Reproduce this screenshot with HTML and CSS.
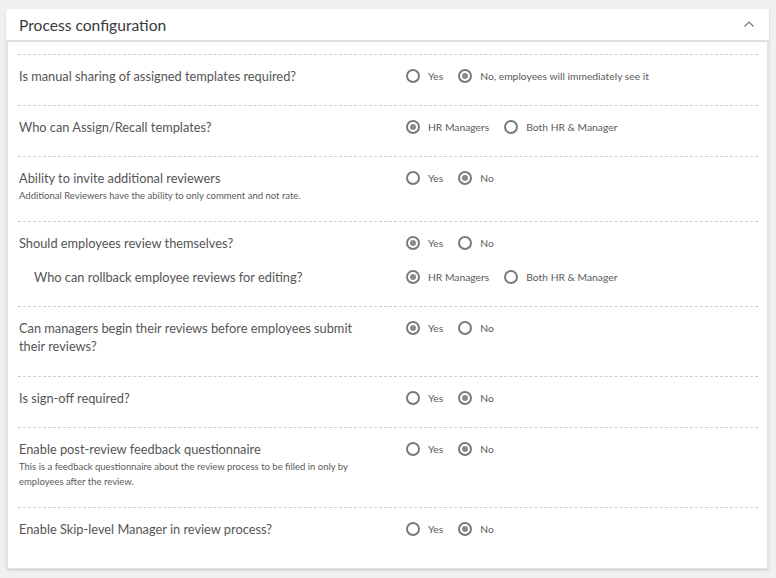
FILE: index.html
```html
<!DOCTYPE html>
<html>
<head>
<meta charset="utf-8">
<link rel="stylesheet" href="styles.css">
</head>
<body>
<div class="card">
  <div class="card-header">
    <span class="title">Process configuration</span>
    <svg class="chevron" width="12" height="8" viewBox="0 0 12 8"><polyline points="1.5,6.5 6,2 10.5,6.5" fill="none" stroke="#777" stroke-width="1.2"/></svg>
  </div>
  <div class="card-body">
    <div class="row">
      <div class="line">
        <div class="label"><div class="q">Is manual sharing of assigned templates required?</div></div>
        <div class="controls">
          <span class="opt"><span class="radio"></span>Yes</span>
          <span class="opt"><span class="radio on"></span>No, employees will immediately see it</span>
        </div>
      </div>
    </div>
    <div class="row">
      <div class="line">
        <div class="label"><div class="q">Who can Assign/Recall templates?</div></div>
        <div class="controls">
          <span class="opt"><span class="radio on"></span>HR Managers</span>
          <span class="opt"><span class="radio"></span>Both HR &amp; Manager</span>
        </div>
      </div>
    </div>
    <div class="row">
      <div class="line">
        <div class="label"><div class="q">Ability to invite additional reviewers</div><div class="sub">Additional Reviewers have the ability to only comment and not rate.</div></div>
        <div class="controls">
          <span class="opt"><span class="radio"></span>Yes</span>
          <span class="opt"><span class="radio on"></span>No</span>
        </div>
      </div>
    </div>
    <div class="row">
      <div class="line">
        <div class="label"><div class="q">Should employees review themselves?</div></div>
        <div class="controls">
          <span class="opt"><span class="radio on"></span>Yes</span>
          <span class="opt"><span class="radio"></span>No</span>
        </div>
      </div>
      <div class="line nested">
        <div class="label"><div class="q">Who can rollback employee reviews for editing?</div></div>
        <div class="controls">
          <span class="opt"><span class="radio on"></span>HR Managers</span>
          <span class="opt"><span class="radio"></span>Both HR &amp; Manager</span>
        </div>
      </div>
    </div>
    <div class="row tall">
      <div class="line">
        <div class="label"><div class="q">Can managers begin their reviews before employees submit their reviews?</div></div>
        <div class="controls">
          <span class="opt"><span class="radio on"></span>Yes</span>
          <span class="opt"><span class="radio"></span>No</span>
        </div>
      </div>
    </div>
    <div class="row">
      <div class="line">
        <div class="label"><div class="q">Is sign-off required?</div></div>
        <div class="controls">
          <span class="opt"><span class="radio"></span>Yes</span>
          <span class="opt"><span class="radio on"></span>No</span>
        </div>
      </div>
    </div>
    <div class="row">
      <div class="line">
        <div class="label"><div class="q">Enable post-review feedback questionnaire</div><div class="sub">This is a feedback questionnaire about the review process to be filled in only by employees after the review.</div></div>
        <div class="controls">
          <span class="opt"><span class="radio"></span>Yes</span>
          <span class="opt"><span class="radio on"></span>No</span>
        </div>
      </div>
    </div>
    <div class="row">
      <div class="line">
        <div class="label"><div class="q">Enable Skip-level Manager in review process?</div></div>
        <div class="controls">
          <span class="opt"><span class="radio"></span>Yes</span>
          <span class="opt"><span class="radio on"></span>No</span>
        </div>
      </div>
    </div>
  </div>
</div>
</body>
</html>
```

FILE: styles.css
```css
html, body {
  margin: 0;
  padding: 0;
  background: #f0f0f0;
  font-family: Lato, "Open Sans", sans-serif;
}
body {
  padding: 9px 7px 8px 6px;
}
.card {
  background: #fff;
  border-radius: 3px;
  box-shadow: 0 1px 2px rgba(0,0,0,0.18);
}
.card-header {
  height: 31px;
  display: flex;
  align-items: center;
  justify-content: space-between;
  padding: 0 14px 0 13px;
  border-bottom: 2px solid #e0e0e0;
}
.title {
  font-size: 15.6px;
  color: #3a3a3a;
}
.chevron {
  margin-top: -1px;
}
.card-body {
  border-left: 2px solid #e4e4e4;
  border-right: 2px solid #e4e4e4;
  border-bottom: 1px solid #e4e4e4;
  border-radius: 0 0 3px 3px;
  padding: 12px 9px 10px 10px;
}
.row {
  border-top: 1px dashed #cfcfcf;
  padding: 12px 0 20px;
}
.row.tall {
  padding-bottom: 21px;
}
.line {
  display: grid;
  grid-template-columns: 388px 1fr;
  align-items: start;
}
.line.nested {
  margin-top: 16px;
}
.line.nested .label {
  padding-left: 16px;
}
.label {
  padding-left: 1px;
}
.q {
  font-size: 12.8px;
  line-height: 18px;
  color: #555;
  max-width: 345px;
}
.sub {
  font-size: 9.5px;
  line-height: 15px;
  color: #5a5a5a;
  margin-top: 1px;
  margin-bottom: -2px;
  max-width: 345px;
}
.controls {
  display: flex;
  align-items: center;
  height: 17px;
}
.opt {
  display: inline-flex;
  align-items: center;
  font-size: 10.3px;
  color: #5a5a5a;
  margin-right: 15px;
}
.radio {
  box-sizing: border-box;
  width: 14px;
  height: 14px;
  border: 2px solid #7a7a7a;
  border-radius: 50%;
  margin-right: 8px;
  position: relative;
  flex: none;
}
.radio.on::after {
  content: "";
  position: absolute;
  left: 2px;
  top: 2px;
  width: 6px;
  height: 6px;
  border-radius: 50%;
  background: #8a8a8a;
}
```
